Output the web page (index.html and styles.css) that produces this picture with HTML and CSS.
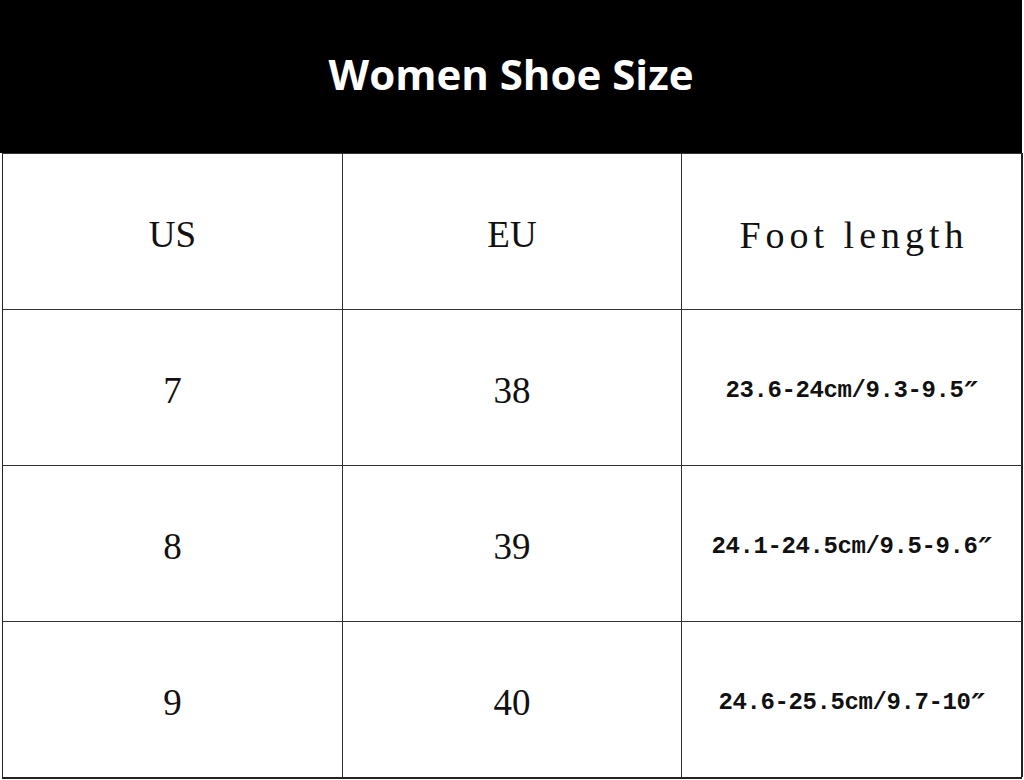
FILE: index.html
```html
<!DOCTYPE html>
<html>
<head>
<meta charset="utf-8">
<link rel="stylesheet" href="styles.css">
</head>
<body>
<div class="chart">
  <div class="title">Women Shoe Size</div>
  <div class="grid">
    <div class="cell serif">US</div>
    <div class="cell serif">EU</div>
    <div class="cell label">Foot length</div>
    <div class="cell serif">7</div>
    <div class="cell serif">38</div>
    <div class="cell mono">23.6-24cm/9.3-9.5<span class="inch">″</span></div>
    <div class="cell serif">8</div>
    <div class="cell serif">39</div>
    <div class="cell mono">24.1-24.5cm/9.5-9.6<span class="inch">″</span></div>
    <div class="cell serif">9</div>
    <div class="cell serif">40</div>
    <div class="cell mono">24.6-25.5cm/9.7-10<span class="inch">″</span></div>
  </div>
</div>
</body>
</html>
```
FILE: styles.css
```css
html, body {
  margin: 0;
  padding: 0;
  background: #fff;
}

.chart {
  width: 1022px;
}

.title {
  height: 153px;
  background: #000;
  color: #fff;
  display: flex;
  align-items: center;
  justify-content: center;
  font-family: "Open Sans", "Liberation Sans", sans-serif;
  font-weight: 700;
  font-size: 42px;
  padding-bottom: 6px;
  box-sizing: border-box;
}

.grid {
  margin-left: 2px;
  width: 1020px;
  display: grid;
  grid-template-columns: 340px 339px 341px;
  grid-auto-rows: 156px;
  border-left: 1px solid #222;
  border-bottom: 2px solid #222;
  box-sizing: border-box;
}

.cell {
  display: flex;
  align-items: center;
  justify-content: center;
  border-right: 1px solid #333;
  border-top: 1px solid #333;
  color: #111;
  padding-top: 6px;
  box-sizing: border-box;
}

.cell:nth-child(3n) {
  border-right: 2px solid #222;
}

.serif {
  font-family: "Liberation Serif", serif;
  font-size: 37px;
}

.label {
  font-family: "Liberation Serif", serif;
  font-size: 38px;
  letter-spacing: 5px;
  padding-left: 5px;
}

.mono {
  font-family: "Liberation Mono", monospace;
  font-size: 24px;
  font-weight: 700;
  letter-spacing: -0.4px;
}

.inch {
  font-family: "DejaVu Sans", sans-serif;
  font-weight: 700;
  font-style: italic;
  font-size: 30px;
  line-height: 1;
  margin-left: 1px;
  margin-top: 4px;
}
```
